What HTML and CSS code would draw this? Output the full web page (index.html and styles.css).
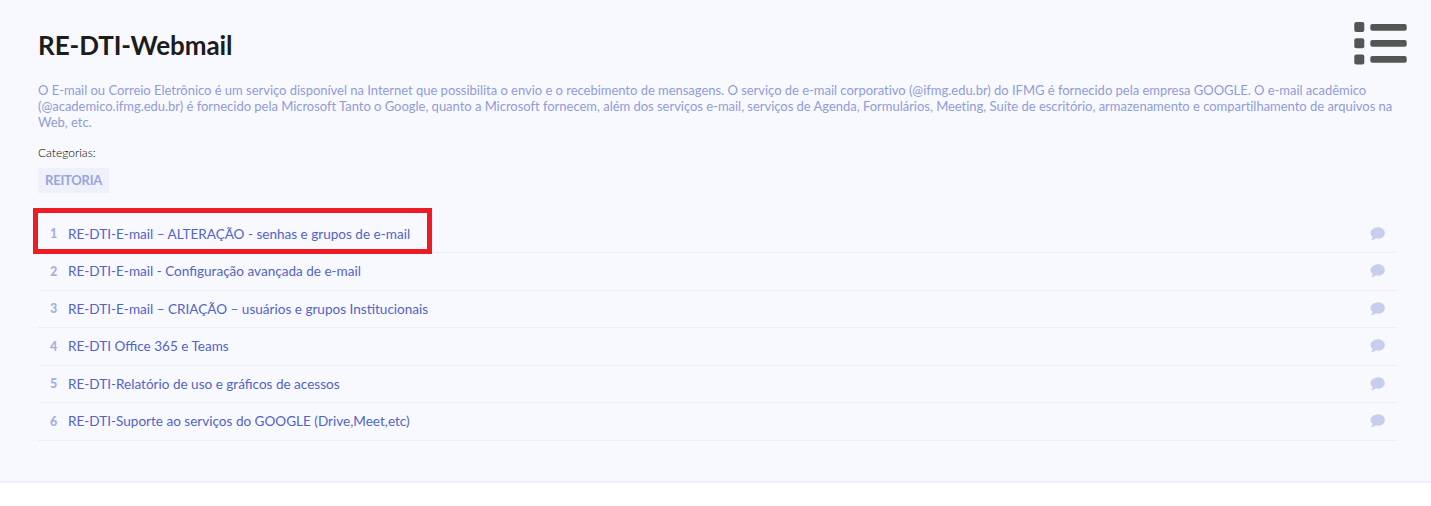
FILE: index.html
```html
<!DOCTYPE html>
<html lang="pt-BR">
<head>
<meta charset="utf-8">
<title>RE-DTI-Webmail</title>
<link rel="stylesheet" href="styles.css">
</head>
<body>
<section class="panel">
  <header class="head">
    <h1 class="title">RE-DTI-Webmail</h1>
    <svg class="list-icon" width="54" height="44" viewBox="0 0 54 44" aria-hidden="true">
      <rect x=".3" y="1" width="10" height="10" rx="2"/>
      <rect x=".3" y="17.300" width="10" height="10" rx="2"/>
      <rect x=".3" y="33.600" width="10" height="10" rx="2"/>
      <rect x="16.300" y="3" width="36.400" height="6.700" rx="2"/>
      <rect x="16.300" y="19" width="36.400" height="6.700" rx="2"/>
      <rect x="16.300" y="35" width="36.400" height="6.700" rx="2"/>
    </svg>
  </header>
  <p class="desc">O E-mail ou Correio Eletrônico é um serviço disponível na Internet que possibilita o envio e o recebimento de mensagens. O serviço de e-mail corporativo (@ifmg.edu.br) do IFMG é fornecido pela empresa GOOGLE. O e-mail acadêmico (@academico.ifmg.edu.br) é fornecido pela Microsoft Tanto o Google, quanto a Microsoft fornecem, além dos serviços e-mail, serviços de Agenda, Formulários, Meeting, Suíte de escritório, armazenamento e compartilhamento de arquivos na Web, etc.</p>
  <div class="cat-label">Categorias:</div>
  <a class="tag" href="#">REITORIA</a>
  <ol class="items">
    <li class="item highlighted"><span class="num">1</span><a class="link" href="#">RE-DTI-E-mail – ALTERAÇÃO - senhas e grupos de e-mail</a><svg class="bubble" width="15" height="14" viewBox="0 0 15 14"><path d="M8.500 .3C11.900 .3 14.800 2.700 14.800 6S11.900 11.700 8.500 11.700C7.600 11.700 6.800 11.600 6 11.300C4.900 12.400 3.100 13.100 .8 13.300C1.700 12.400 2.400 11.300 2.700 10C1.200 8.900 .4 7.500 .4 6 .4 2.700 5 .3 8.500 .3Z"/></svg></li>
    <li class="item"><span class="num">2</span><a class="link" href="#">RE-DTI-E-mail - Configuração avançada de e-mail</a><svg class="bubble" width="15" height="14" viewBox="0 0 15 14"><path d="M8.500 .3C11.900 .3 14.800 2.700 14.800 6S11.900 11.700 8.500 11.700C7.600 11.700 6.800 11.600 6 11.300C4.900 12.400 3.100 13.100 .8 13.300C1.700 12.400 2.400 11.300 2.700 10C1.200 8.900 .4 7.500 .4 6 .4 2.700 5 .3 8.500 .3Z"/></svg></li>
    <li class="item"><span class="num">3</span><a class="link" href="#">RE-DTI-E-mail – CRIAÇÃO – usuários e grupos Institucionais</a><svg class="bubble" width="15" height="14" viewBox="0 0 15 14"><path d="M8.500 .3C11.900 .3 14.800 2.700 14.800 6S11.900 11.700 8.500 11.700C7.600 11.700 6.800 11.600 6 11.300C4.900 12.400 3.100 13.100 .8 13.300C1.700 12.400 2.400 11.300 2.700 10C1.200 8.900 .4 7.500 .4 6 .4 2.700 5 .3 8.500 .3Z"/></svg></li>
    <li class="item"><span class="num">4</span><a class="link" href="#">RE-DTI Office 365 e Teams</a><svg class="bubble" width="15" height="14" viewBox="0 0 15 14"><path d="M8.500 .3C11.900 .3 14.800 2.700 14.800 6S11.900 11.700 8.500 11.700C7.600 11.700 6.800 11.600 6 11.300C4.900 12.400 3.100 13.100 .8 13.300C1.700 12.400 2.400 11.300 2.700 10C1.200 8.900 .4 7.500 .4 6 .4 2.700 5 .3 8.500 .3Z"/></svg></li>
    <li class="item"><span class="num">5</span><a class="link" href="#">RE-DTI-Relatório de uso e gráficos de acessos</a><svg class="bubble" width="15" height="14" viewBox="0 0 15 14"><path d="M8.500 .3C11.900 .3 14.800 2.700 14.800 6S11.900 11.700 8.500 11.700C7.600 11.700 6.800 11.600 6 11.300C4.900 12.400 3.100 13.100 .8 13.300C1.700 12.400 2.400 11.300 2.700 10C1.200 8.900 .4 7.500 .4 6 .4 2.700 5 .3 8.500 .3Z"/></svg></li>
    <li class="item"><span class="num">6</span><a class="link" href="#">RE-DTI-Suporte ao serviços do GOOGLE (Drive,Meet,etc)</a><svg class="bubble" width="15" height="14" viewBox="0 0 15 14"><path d="M8.500 .3C11.900 .3 14.800 2.700 14.800 6S11.900 11.700 8.500 11.700C7.600 11.700 6.800 11.600 6 11.300C4.900 12.400 3.100 13.100 .8 13.300C1.700 12.400 2.400 11.300 2.700 10C1.200 8.900 .4 7.500 .4 6 .4 2.700 5 .3 8.500 .3Z"/></svg></li>
  </ol>
</section>
</body>
</html>
```
FILE: styles.css
```css
* { box-sizing: border-box; }
html, body { margin: 0; padding: 0; background: #fff; }
body { font-family: Lato, "Open Sans", sans-serif; }
.panel {
  height: 483px;
  padding: 21px 34px 0 38px;
  background: #f8f9fe;
  border-bottom: 2px solid #eeeff8;
}
.head {
  display: flex;
  justify-content: space-between;
  align-items: flex-start;
  height: 53px;
}
.title {
  margin: 8px 0 0;
  font-size: 26px;
  line-height: 32px;
  font-weight: 700;
  color: #1c1c1c;
  letter-spacing: -0.07px;
}
.list-icon { fill: #555; margin-right: -11px; }
.desc {
  margin: 8px 0 0;
  font-size: 13px;
  line-height: 16px;
  color: #8f9cd8;
  letter-spacing: -0.025px;
}
.cat-label {
  margin-top: 15px;
  font-size: 12px;
  line-height: 16px;
  font-weight: 300;
  color: #000;
}
.tag {
  display: inline-block;
  margin-top: 7px;
  padding: 0 7px;
  height: 25px;
  line-height: 25px;
  font-size: 13px;
  font-weight: 700;
  color: #98a5dc;
  background: #eef0fa;
  text-decoration: none;
  letter-spacing: -0.22px;
}
.items {
  list-style: none;
  margin: 22.5px 0 0;
  padding: 0;
}
.item {
  position: relative;
  display: flex;
  align-items: center;
  height: 37.5px;
  padding-left: 12px;
  border-bottom: 1px solid #eeeff6;
}
.num {
  width: 18px;
  font-size: 12.5px;
  font-weight: 900;
  color: #a3afe0;
}
.link {
  flex: 1;
  font-size: 13.55px;
  color: #5263c6;
  text-decoration: none;
}
.bubble { fill: #c5cfec; margin-right: 12px; }
.highlighted::after {
  content: "";
  box-sizing: border-box;
  position: absolute;
  left: -5px;
  top: -7.500px;
  width: 399px;
  height: 46px;
  border: 5px solid #ed1c24;
}
```
